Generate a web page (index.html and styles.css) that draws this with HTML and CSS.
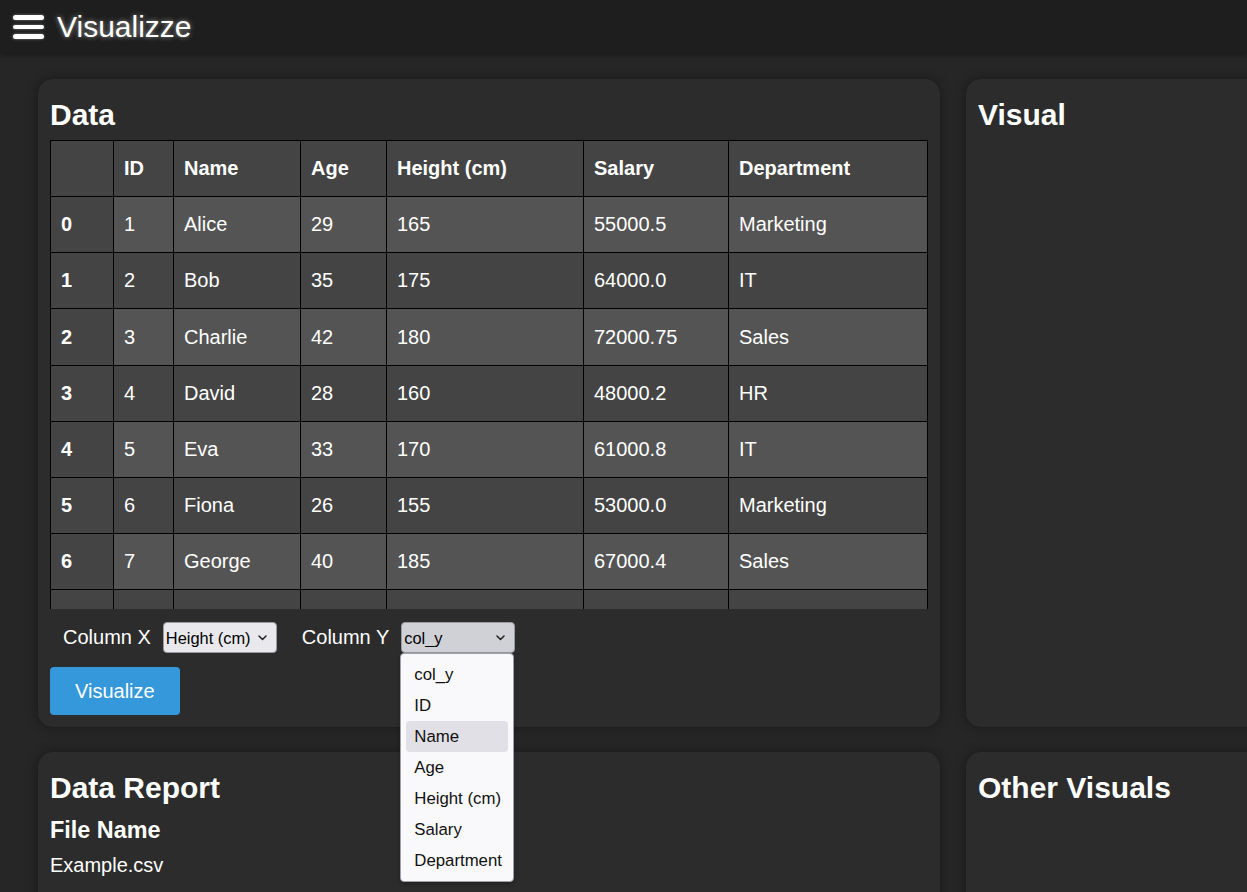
FILE: index.html
```html
<!DOCTYPE html>
<html lang="en">
<head>
<meta charset="utf-8">
<title>Visualizze</title>
<link rel="stylesheet" href="styles.css">
</head>
<body>
<header class="topbar">
  <div class="burger"><span></span><span></span><span></span></div>
  <div class="brand">Visualizze</div>
</header>
<main class="layout">
  <section class="card">
    <h2 class="card-title">Data</h2>
    <div class="table-wrap">
      <table class="data-table">
        <colgroup>
          <col class="c-idx"><col class="c-id"><col class="c-name"><col class="c-age"><col class="c-height"><col class="c-salary"><col class="c-dept">
        </colgroup>
        <thead>
          <tr><th></th><th>ID</th><th>Name</th><th>Age</th><th>Height (cm)</th><th>Salary</th><th>Department</th></tr>
        </thead>
        <tbody>
          <tr><th>0</th><td>1</td><td>Alice</td><td>29</td><td>165</td><td>55000.5</td><td>Marketing</td></tr>
          <tr><th>1</th><td>2</td><td>Bob</td><td>35</td><td>175</td><td>64000.0</td><td>IT</td></tr>
          <tr><th>2</th><td>3</td><td>Charlie</td><td>42</td><td>180</td><td>72000.75</td><td>Sales</td></tr>
          <tr><th>3</th><td>4</td><td>David</td><td>28</td><td>160</td><td>48000.2</td><td>HR</td></tr>
          <tr><th>4</th><td>5</td><td>Eva</td><td>33</td><td>170</td><td>61000.8</td><td>IT</td></tr>
          <tr><th>5</th><td>6</td><td>Fiona</td><td>26</td><td>155</td><td>53000.0</td><td>Marketing</td></tr>
          <tr><th>6</th><td>7</td><td>George</td><td>40</td><td>185</td><td>67000.4</td><td>Sales</td></tr>
          <tr><th>7</th><td>8</td><td>Hannah</td><td>31</td><td>162</td><td>58000.3</td><td>HR</td></tr>
          <tr><th>8</th><td>9</td><td>Ian</td><td>37</td><td>178</td><td>69000.1</td><td>IT</td></tr>
          <tr><th>9</th><td>10</td><td>Jane</td><td>30</td><td>168</td><td>56000.6</td><td>Marketing</td></tr>
        </tbody>
      </table>
    </div>
    <div class="controls">
      <label class="ctl-label" for="colx">Column X</label>
      <span class="select-wrap">
        <select id="colx" class="select">
          <option>col_x</option><option>ID</option><option>Name</option><option>Age</option>
          <option selected>Height (cm)</option><option>Salary</option><option>Department</option>
        </select>
        <svg class="chev" width="9" height="6" viewBox="0 0 9 6"><path d="M1 1 L4.5 4.5 L8 1" fill="none" stroke="#222" stroke-width="1.5" stroke-linecap="round" stroke-linejoin="round"/></svg>
      </span>
      <label class="ctl-label" for="coly">Column Y</label>
      <span class="select-wrap">
        <select id="coly" class="select select-open">
          <option selected>col_y</option><option>ID</option><option>Name</option><option>Age</option>
          <option>Height (cm)</option><option>Salary</option><option>Department</option>
        </select>
        <svg class="chev" width="9" height="6" viewBox="0 0 9 6"><path d="M1 1 L4.5 4.5 L8 1" fill="none" stroke="#222" stroke-width="1.5" stroke-linecap="round" stroke-linejoin="round"/></svg>
        <div class="dropdown">
          <div class="dd-item">col_y</div>
          <div class="dd-item">ID</div>
          <div class="dd-item dd-hover">Name</div>
          <div class="dd-item">Age</div>
          <div class="dd-item">Height (cm)</div>
          <div class="dd-item">Salary</div>
          <div class="dd-item">Department</div>
        </div>
      </span>
    </div>
    <button class="btn">Visualize</button>
  </section>
  <section class="card">
    <h2 class="card-title">Visual</h2>
  </section>
  <section class="card card-low">
    <h2 class="card-title">Data Report</h2>
    <h3 class="sub-title">File Name</h3>
    <p class="text">Example.csv</p>
  </section>
  <section class="card card-low">
    <h2 class="card-title">Other Visuals</h2>
  </section>
</main>
</body>
</html>
```
FILE: styles.css
```css
html, body {
  margin: 0;
  padding: 0;
  overflow: hidden;
}
body {
  background: #262626;
  color: #ffffff;
  font-family: "Liberation Sans", Arial, sans-serif;
  font-size: 20px;
}
.topbar {
  height: 53px;
  background: #1e1e1e;
  display: flex;
  align-items: center;
  padding-left: 13px;
  box-shadow: 0 2px 6px rgba(0, 0, 0, 0.35);
  position: relative;
  z-index: 1;
}
.burger {
  width: 31px;
  display: flex;
  flex-direction: column;
  gap: 5px;
  margin-right: 13px;
  margin-top: 1px;
}
.burger span {
  display: block;
  height: 4.5px;
  border-radius: 3px;
  background: #ffffff;
  box-shadow: 0 0 3px rgba(255, 255, 255, 0.4);
}
.brand {
  font-size: 30px;
  line-height: 34px;
  color: #ffffff;
  text-shadow: 0 0 5px rgba(255, 255, 255, 0.55);
}
.layout {
  display: grid;
  grid-template-columns: 902px 902px;
  column-gap: 26px;
  row-gap: 25px;
  padding: 26px 0 0 38px;
  width: 2000px;
}
.card {
  background: #2c2c2c;
  border-radius: 15px;
  padding: 12px;
  box-shadow: 0 0 12px rgba(0, 0, 0, 0.35);
  position: relative;
}
.card-low {
  min-height: 300px;
}
.card-title {
  font-size: 30px;
  line-height: 34px;
  font-weight: bold;
  margin: 7px 0 8px;
}
.sub-title {
  font-size: 23.4px;
  line-height: 27px;
  font-weight: bold;
  margin: 12px 0 10px;
}
.text {
  margin: 10px 0;
  line-height: 23px;
}
.table-wrap {
  height: 469px;
  overflow: hidden;
}
.data-table {
  width: 877px;
  table-layout: fixed;
  border-collapse: collapse;
  border: 1px solid #000;
}
.c-idx { width: 63px; }
.c-id { width: 60px; }
.c-name { width: 127px; }
.c-age { width: 86px; }
.c-height { width: 197px; }
.c-salary { width: 145px; }
.c-dept { width: 199px; }
.data-table th,
.data-table td {
  border: 1px solid #000;
  padding: 16px 10px;
  line-height: 23px;
  text-align: left;
  white-space: nowrap;
  color: #ffffff;
}
.data-table tbody th,
.data-table tbody td {
  padding-top: 16.2px;
}
.data-table th {
  background: #444444;
  font-weight: bold;
}
.data-table tbody tr:nth-child(odd) td {
  background: #545454;
}
.data-table tbody tr:nth-child(even) td {
  background: #444444;
}
.controls {
  display: flex;
  align-items: center;
  margin-top: 13px;
  height: 31px;
}
.ctl-label {
  margin: 0 12px 0 13px;
  line-height: 23px;
}
.select-wrap {
  position: relative;
  display: inline-block;
  margin-right: 12px;
}
.select {
  appearance: none;
  -webkit-appearance: none;
  width: 114px;
  height: 31px;
  background: #e9e9ed;
  border: 1px solid #9a9aa2;
  border-radius: 4px;
  font-family: "Liberation Sans", Arial, sans-serif;
  font-size: 16.4px;
  color: #000000;
  padding: 0 0 0 2px;
  display: block;
}
.select-open {
  background: #d0d0d7;
}
.chev {
  position: absolute;
  right: 10px;
  top: 13px;
  pointer-events: none;
}
.dropdown {
  position: absolute;
  left: -1px;
  top: 31px;
  box-sizing: border-box;
  width: 114px;
  padding: 5px;
  background: #f9f9fb;
  border: 1px solid #a0a0a8;
  border-radius: 4px;
  box-shadow: 0 2px 4px rgba(0, 0, 0, 0.25);
  z-index: 5;
}
.dd-item {
  height: 31px;
  line-height: 31px;
  padding-left: 8px;
  font-size: 16.8px;
  color: #111111;
  border-radius: 4px;
  white-space: nowrap;
}
.dd-hover {
  background: #e0e0e6;
}
.btn {
  margin-top: 14px;
  display: block;
  height: 48px;
  padding: 0 25px;
  background: #3498db;
  color: #ffffff;
  border: none;
  border-radius: 4px;
  font-family: "Liberation Sans", Arial, sans-serif;
  font-size: 20px;
}
```
